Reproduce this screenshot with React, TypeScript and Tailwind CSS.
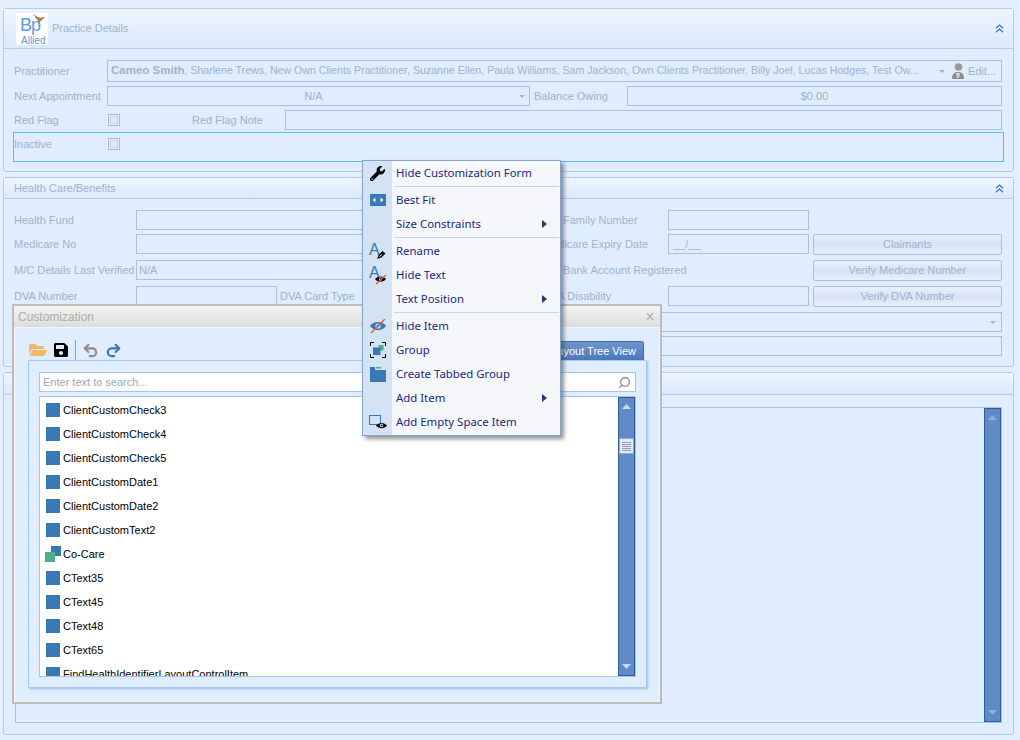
import React from 'react'
import { FaFolderOpen, FaSave, FaWrench } from 'react-icons/fa'
import { Redo2, Search, Undo2 } from 'lucide-react'

// ─── Small parts ──────────────────────────────────────────────
function DropArrow({ color = '#9fb2cf' }: { color?: string }) {
  return (
    <svg width="6" height="3" viewBox="0 0 6 3" className="shrink-0">
      <path d="M0 0h6L3 3z" fill={color} />
    </svg>
  )
}

function Chevrons() {
  return (
    <svg width="9" height="9" viewBox="0 0 9 9" fill="none" stroke="#3f72ad" strokeWidth="1.2">
      <path d="M1 4.2 4.5 1 8 4.2M1 8.2 4.5 5 8 8.2" />
    </svg>
  )
}

function Field({ className = '', children }: { className?: string; children?: React.ReactNode }) {
  return (
    <div className={`flex h-[20px] shrink-0 items-center border border-[#a8c0e4] text-[#9fb2cd] ${className}`}>
      {children}
    </div>
  )
}

function Label({ className = '', children }: { className?: string; children: React.ReactNode }) {
  return <div className={`shrink-0 whitespace-nowrap leading-[20px] text-[#9fb2cd] ${className}`}>{children}</div>
}

function Check() {
  return (
    <div className="flex h-[12px] w-[12px] items-center justify-center border border-[#a9b7cc] bg-[#e6edf8]">
      <div className="h-[8px] w-[8px] border border-[#c5d0e0] bg-[#dfe8f6]" />
    </div>
  )
}

function VerifyButton({ children }: { children: string }) {
  return (
    <div className="flex h-[21px] w-[189px] shrink-0 items-center justify-center rounded-[2px] border border-[#a8c0e4] bg-gradient-to-b from-[#e9f0fb] via-[#d6e3f5] to-[#e6f1fd] text-[#9fb2cd]">
      {children}
    </div>
  )
}

function Panel({ className, children }: { className: string; children: React.ReactNode }) {
  return (
    <section className={`ml-[3px] w-[1011px] rounded-[3px] border border-[#aecbf0] bg-[#e0edfe] ${className}`}>
      {children}
    </section>
  )
}

function ScrollBar({ thumb = false, dim = false }: { thumb?: boolean; dim?: boolean }) {
  const arrow = dim ? '#8fb0de' : '#c9daf2'
  return (
    <div className="flex h-full w-[17px] shrink-0 flex-col items-center justify-between border border-[#2f5c97] bg-[#608ac6] py-[6px]">
      <svg width="9" height="5" viewBox="0 0 9 5"><path d="M4.5 0 9 5H0z" fill={arrow} /></svg>
      {thumb && (
        <div className="absolute top-[41px] flex h-[16px] w-[15px] flex-col items-center justify-center gap-[1px] border border-[#8fa9cf] bg-[#e4ebf5]">
          <div className="h-px w-[9px] bg-[#8b9db8]" />
          <div className="h-px w-[9px] bg-[#8b9db8]" />
          <div className="h-px w-[9px] bg-[#8b9db8]" />
          <div className="h-px w-[9px] bg-[#8b9db8]" />
          <div className="h-px w-[9px] bg-[#8b9db8]" />
        </div>
      )}
      <svg width="9" height="5" viewBox="0 0 9 5"><path d="M0 0h9L4.5 5z" fill={arrow} /></svg>
    </div>
  )
}

// ─── Menu icons ───────────────────────────────────────────────
function EyeIcon({ color = '#000' }: { color?: string }) {
  return (
    <>
      <path d="M0 4C2.5.5 8.500.5 11 4 8.500 7.500 2.500 7.500 0 4z" fill={color} />
      <circle cx="5.500" cy="4" r="1.700" fill="#fff" />
      <circle cx="5.500" cy="4" r="1" fill={color} />
    </>
  )
}

const ICONS: Record<string, React.ReactNode> = {
  wrench: <FaWrench size={15} color="#000" />,
  fit: (
    <svg width="16" height="12" viewBox="0 0 16 12">
      <rect width="16" height="12" fill="#3878b4" />
      <path d="M2.500 6 5.500 3.800v4.400zM13.500 6l-3-2.200v4.400z" fill="#fff" />
    </svg>
  ),
  rename: (
    <svg width="18" height="24" viewBox="0 0 18 24">
      <text x="0" y="16" fontSize="16" fill="#3878b4" fontFamily="Liberation Sans, sans-serif">A</text>
      <path d="M8 20l1.500-4 4-4 3 2.500-4 4z" fill="#000" />
      <path d="M10.500 17.500l2.500-2" stroke="#fff" strokeWidth="1" />
    </svg>
  ),
  hideText: (
    <svg width="18" height="24" viewBox="0 0 18 24">
      <text x="0" y="15" fontSize="16" fill="#3878b4" fontFamily="Liberation Sans, sans-serif">A</text>
      <g transform="translate(6 12)"><EyeIcon /></g>
      <path d="M7 21 17 12" stroke="#e0562f" strokeWidth="1.300" />
    </svg>
  ),
  hideItem: (
    <svg width="16" height="14" viewBox="0 0 16 14">
      <path d="M0 7C3.500 1.500 12.500 1.500 16 7 12.500 12.500 3.500 12.500 0 7z" fill="#3878b4" />
      <circle cx="8" cy="7" r="2.600" fill="#e0edfa" />
      <circle cx="8" cy="7" r="1.400" fill="#3878b4" />
      <path d="M1 14 15 0" stroke="#e0562f" strokeWidth="1.300" />
    </svg>
  ),
  group: (
    <svg width="16" height="16" viewBox="0 0 16 16" fill="none">
      <path d="M.5 4V.5H4M12 .5h3.500V4M15.500 12v3.500H12M4 15.500H.5V12" stroke="#000" />
      <rect x="8.500" y="3" width="5" height="5.500" fill="#4fae8b" />
      <rect x="3" y="5.500" width="7.500" height="7.500" fill="#3878b4" />
    </svg>
  ),
  tabbed: (
    <svg width="16" height="15" viewBox="0 0 16 15">
      <path d="M0 0h5v3h11v12H0z" fill="#3878b4" />
      <rect x="6" y="0" width="5" height="1.500" fill="#4fae8b" />
    </svg>
  ),
  empty: (
    <svg width="18" height="15" viewBox="0 0 18 15" fill="none">
      <rect x=".5" y=".5" width="11" height="9" stroke="#3878b4" />
      <g transform="translate(7 6.500)"><EyeIcon /></g>
    </svg>
  ),
}

type MenuEntry = { label: string; icon?: string; sub?: boolean } | 'sep'

const MENU: MenuEntry[] = [
  { label: 'Hide Customization Form', icon: 'wrench' },
  'sep',
  { label: 'Best Fit', icon: 'fit' },
  { label: 'Size Constraints', sub: true },
  'sep',
  { label: 'Rename', icon: 'rename' },
  { label: 'Hide Text', icon: 'hideText' },
  { label: 'Text Position', sub: true },
  'sep',
  { label: 'Hide Item', icon: 'hideItem' },
  { label: 'Group', icon: 'group' },
  { label: 'Create Tabbed Group', icon: 'tabbed' },
  { label: 'Add Item', sub: true },
  { label: 'Add Empty Space Item', icon: 'empty' },
]

const TREE_ITEMS = [
  'ClientCustomCheck3',
  'ClientCustomCheck4',
  'ClientCustomCheck5',
  'ClientCustomDate1',
  'ClientCustomDate2',
  'ClientCustomText2',
  'Co-Care',
  'CText35',
  'CText45',
  'CText48',
  'CText65',
  'FindHealthIdentifierLayoutControlItem',
]

function ContextMenu() {
  return (
    <div className="absolute left-[362px] top-[160px] w-[199px] border border-[#84a3cf] bg-[#f5f7fb] pb-[1px] font-['Noto_Sans',sans-serif] text-[11.400px] shadow-[3px_3px_4px_rgba(60,60,60,0.55)]">
      <div className="absolute bottom-0 left-0 top-0 w-[29px] bg-[#d3e3f3]" />
      <div className="relative">
        {MENU.map((entry, i) =>
          entry === 'sep' ? (
            <div key={i} className="flex h-[3px] items-center pl-[31px] pr-[1px]">
              <div className="h-px w-full bg-[#c3d6ea]" />
            </div>
          ) : (
            <div key={entry.label} className="flex h-[24px] items-center text-[#20277f]">
              <div className="flex w-[29px] shrink-0 items-center justify-center">
                {entry.icon && ICONS[entry.icon]}
              </div>
              <span className="-mt-[1px] ml-[4px] flex-1 whitespace-nowrap">{entry.label}</span>
              {entry.sub && (
                <svg width="5" height="8" viewBox="0 0 5 8" className="mr-[13px]">
                  <path d="M0 0 5 4 0 8z" fill="#1b3b80" />
                </svg>
              )}
            </div>
          ),
        )}
      </div>
    </div>
  )
}

function TreeIcon({ item }: { item: string }) {
  if (item === 'Co-Care') {
    return (
      <div className="relative -ml-[1px] -mr-[1px] h-[16px] w-[16px] shrink-0">
        <div className="ml-[6px] h-[10px] w-[10px] bg-[#3878b4]" />
        <div className="absolute left-0 top-[6px] h-[10px] w-[10px] bg-[#4fae8b]" />
      </div>
    )
  }
  return <div className="h-[14px] w-[14px] shrink-0 bg-[#3878b4]" />
}

function CustomizationWindow() {
  return (
    <div className="absolute left-[12px] top-[304px] flex h-[400px] w-[650px] flex-col border-2 border-[#bdbcb9] bg-[#e0edfe]">
      <div className="flex h-[21px] shrink-0 items-center justify-between bg-gradient-to-b from-[#f5f5f4] to-[#dcdcda] pl-[4px] pr-[6px] text-[12px] text-[#b0aca6]">
        <span>Customization</span>
        <svg width="8" height="7" viewBox="0 0 8 7" stroke="#b4b4b4" strokeWidth="1.500">
          <path d="M1 0 7 7M7 0 1 7" />
        </svg>
      </div>
      <div className="flex flex-1 flex-col border border-[#f2f5fa] pl-[13px] pr-[12px] pt-[12px]">
        <div className="flex h-[20px] items-start justify-between">
          <div className="flex items-center">
            <FaFolderOpen size={18} color="#f3b866" className="ml-[1px]" />
            <FaSave size={16} color="#000" className="ml-[6px]" />
            <div className="ml-[6px] h-[20px] w-px bg-[#7fa6d6]" />
            <Undo2 size={17} color="#8d8d8d" strokeWidth={3} className="ml-[6px]" />
            <Redo2 size={17} color="#3878b4" strokeWidth={3} className="ml-[6px]" />
          </div>
          <div className="mr-[3px] mt-[1px] flex h-[19px] w-[105px] items-center justify-end rounded-t-[3px] border border-b-0 border-[#3f66a8] bg-gradient-to-b from-[#6f96cf] to-[#4a78b9] pr-[7px] text-white">
            Layout Tree View
          </div>
        </div>
        <div className="flex h-[328px] flex-col border border-[#a7c8ef] px-[10px] pb-[10px] pt-[11px] shadow-[1px_1px_2px_rgba(100,140,200,0.5)]">
          <div className="flex h-[20px] shrink-0 items-center justify-between border border-[#a8c4e8] bg-white pl-[3px] pr-[4px] text-[#9aa7b8]">
            <span>Enter text to search...</span>
            <Search size={13} color="#777" style={{ transform: 'scaleX(-1)' }} />
          </div>
          <div className="relative mt-[4px] flex h-[281px] shrink-0 border border-[#a8c4e8] bg-white">
            <div className="min-w-0 flex-1 overflow-hidden pl-[6px] pt-[1px]">
              {TREE_ITEMS.map((item) => (
                <div key={item} className="flex h-[24px] items-center gap-[3px] whitespace-nowrap text-black">
                  <TreeIcon item={item} />
                  <span>{item}</span>
                </div>
              ))}
            </div>
            <div className="relative flex h-full items-center justify-center">
              <ScrollBar thumb />
            </div>
          </div>
        </div>
      </div>
    </div>
  )
}

// ─── Page ─────────────────────────────────────────────────────
export default function App() {
  return (
    <div className="relative h-[740px] w-[1020px] overflow-hidden bg-[#e3eefe] pt-[8px] font-['Liberation_Sans',sans-serif] text-[11px]">
      {/* Practice Details */}
      <Panel className="h-[164px]">
        <header className="flex h-[40px] items-center justify-between border-b border-[#aecbf0] bg-gradient-to-b from-[#eef5ff] to-[#dae9fd] pl-[12px] pr-[9px]">
          <div className="flex items-center gap-[4px]">
            <div className="relative flex h-[32px] w-[32px] flex-col bg-white pl-[4px] leading-none text-[#5b9bd5]">
              <span className="mt-[3px] text-[18px] leading-[19px] tracking-[-1px]">Bp</span>
              <span className="ml-[1px] mt-[1px] text-[10px] leading-[10px]">Allied</span>
              <svg width="13" height="11" viewBox="0 0 13 11" className="absolute right-[2px] top-[1px]">
                <path d="M0 0 5 3l3 1 4-1-3 3-2 2-1 3-1-4z" fill="#a8835f" />
                <path d="M7 4l5-1-3 2z" fill="#e0652f" />
              </svg>
            </div>
            <span className="text-[#9fb2cd]">Practice Details</span>
          </div>
          <Chevrons />
        </header>
        <div className="pl-[10px] pr-[11px] pt-[11px]">
          <div className="flex h-[22px] items-center">
            <Label className="w-[93px]">Practitioner</Label>
            <Field className="h-[22px] w-[895px] pl-[3px] pr-[5px]">
              <span className="min-w-0 flex-1 overflow-hidden whitespace-nowrap text-[10.600px]">
                <b className="text-[11.500px] font-bold">Cameo Smith</b>, Sharlene Trews, New Own Clients Practitioner, Suzanne Ellen, Paula Williams, Sam Jackson, Own Clients Practitioner, Billy Joel, Lucas Hodges, Test Ow...
              </span>
              <DropArrow />
              <svg width="14" height="18" viewBox="0 0 14 18" className="ml-[6px] shrink-0">
                <circle cx="7.500" cy="5" r="3.800" fill="#9a9a98" />
                <path d="M1 17c0-5 2-7 6-7s6 2 6 7z" fill="#8c8c8a" />
                <path d="M5 11h4l-1 5H6z" fill="#d5d5d3" />
              </svg>
              <span className="ml-[3px]">Edit...</span>
            </Field>
          </div>
          <div className="mt-[4px] flex items-center">
            <Label className="w-[93px]">Next Appointment</Label>
            <Field className="w-[423px] pr-[4px]">
              <span className="flex-1 text-center">N/A</span>
              <DropArrow />
            </Field>
            <Label className="w-[97px] pl-[4px]">Balance Owing</Label>
            <Field className="flex-1 justify-center">$0.00</Field>
          </div>
          <div className="mt-[4px] flex items-center">
            <Label className="w-[94px]">Red Flag</Label>
            <Check />
            <Label className="w-[165px] pl-[72px]">Red Flag Note</Label>
            <Field className="flex-1" />
          </div>
          <div className="-ml-[1px] -mr-[2px] mt-[2px] flex h-[30px] items-start border border-[#57bdf5] pt-[1px]">
            <Label className="w-[94px]">Inactive</Label>
            <div className="mt-[4px]"><Check /></div>
          </div>
        </div>
      </Panel>

      {/* Health Care/Benefits */}
      <Panel className="mt-[5px] h-[190px]">
        <header className="flex h-[21px] items-center justify-between border-b border-[#aecbf0] bg-gradient-to-b from-[#eef5ff] to-[#dae9fd] pl-[10px] pr-[9px]">
          <span className="text-[#9fb2cd]">Health Care/Benefits</span>
          <Chevrons />
        </header>
        <div className="pl-[10px] pr-[11px] pt-[11px]">
          <div className="flex items-center">
            <Label className="w-[122px]">Health Fund</Label>
            <Field className="w-[284px]" />
            <Label className="w-[248px] pl-[143px]">Family Number</Label>
            <Field className="w-[141px]" />
          </div>
          <div className="mt-[4px] flex h-[21px] items-start">
            <Label className="w-[122px]">Medicare No</Label>
            <Field className="w-[284px]" />
            <Label className="w-[248px] pl-[123px]">Medicare Expiry Date</Label>
            <Field className="w-[141px] pl-[4px]">__/__</Field>
            <div className="ml-[4px]"><VerifyButton>Claimants</VerifyButton></div>
          </div>
          <div className="mt-[5px] flex h-[21px] items-start">
            <Label className="w-[122px]">M/C Details Last Verified</Label>
            <Field className="w-[284px] pl-[2px]">N/A</Field>
            <Label className="w-[393px] pl-[143px]">Bank Account Registered</Label>
            <VerifyButton>Verify Medicare Number</VerifyButton>
          </div>
          <div className="mt-[5px] flex h-[21px] items-start">
            <Label className="w-[122px]">DVA Number</Label>
            <Field className="w-[141px]" />
            <Label className="w-[143px] pl-[3px]">DVA Card Type</Label>
            <Label className="w-[248px] pl-[123px]">DVA Disability</Label>
            <Field className="w-[141px]" />
            <div className="ml-[4px]"><VerifyButton>Verify DVA Number</VerifyButton></div>
          </div>
          <div className="ml-[122px] mt-[5px]">
            <Field className="justify-end pr-[5px]"><DropArrow /></Field>
          </div>
          <div className="ml-[122px] mt-[4px]">
            <Field />
          </div>
        </div>
      </Panel>

      {/* Third group */}
      <Panel className="mt-[5px] h-[363px]">
        <header className="h-[22px] border-b border-[#aecbf0] bg-gradient-to-b from-[#eef5ff] to-[#dae9fd]" />
        <div className="pl-[11px] pr-[11px] pt-[12px]">
          <div className="flex h-[316px] justify-end border border-[#a8c0e4]">
            <ScrollBar dim />
          </div>
        </div>
      </Panel>

      <CustomizationWindow />
      <ContextMenu />
    </div>
  )
}
